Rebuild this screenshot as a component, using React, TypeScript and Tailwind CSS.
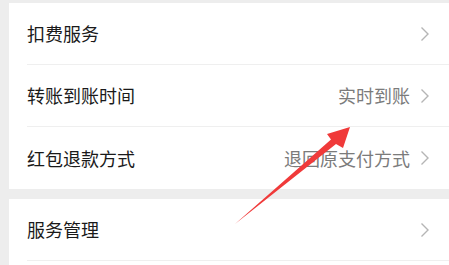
interface Row {
  label: string
  value?: string
}

const groups: Row[][] = [
  [{ label: "扣费服务" }, { label: "转账到账时间", value: "实时到账" }, { label: "红包退款方式", value: "退回原支付方式" }],
  [{ label: "服务管理" }],
]

function Chevron() {
  return (
    <svg width="10" height="16" viewBox="0 0 10 16" className="shrink-0">
      <polyline points="1.5,1.5 8,8 1.5,14.5" fill="none" stroke="#b5b5b5" strokeWidth="1.4" />
    </svg>
  )
}

function SettingRow({ row, last }: { row: Row; last: boolean }) {
  return (
    <div className="pl-[18px]">
      <div
        className={`flex items-center h-[62px] pr-[19px] ${last ? "" : "border-b border-[#efefef]"}`}
      >
        <span className="flex-1 text-[18px] text-[#1a1a1a]">{row.label}</span>
        {row.value && <span className="text-[18px] text-[#7b7b7b] mr-[10px]">{row.value}</span>}
        <Chevron />
      </div>
    </div>
  )
}

export default function App() {
  return (
    <div
      className="relative w-[449px] h-[265px] overflow-hidden bg-[#ededed] pt-[3px] pl-[9px]"
      style={{ fontFamily: '"Noto Sans CJK SC", "Noto Sans", sans-serif' }}
    >
      <div className="bg-white">
        {groups[0].map((row, i) => (
          <SettingRow key={row.label} row={row} last={i === groups[0].length - 1} />
        ))}
      </div>
      <div className="bg-white mt-[10px]">
        <SettingRow row={groups[1][0]} last={false} />
        <div className="h-[20px]" />
      </div>

      {/* annotation arrow */}
      <svg className="absolute inset-0 pointer-events-none" width="449" height="265" viewBox="0 0 449 265">
        <polygon
          points="350,127 327,134 331,139.5 235,224 336,144 343,148"
          fill="#f03a3a"
        />
      </svg>
    </div>
  )
}
